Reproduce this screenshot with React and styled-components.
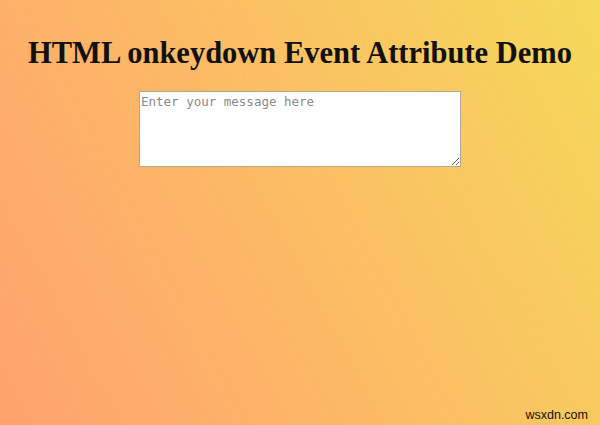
import React from "react";
import styled, { createGlobalStyle } from "styled-components";

const GlobalStyle = createGlobalStyle`
  html, body {
    margin: 0;
    padding: 0;
  }
  body {
    font-family: "Liberation Serif", "Times New Roman", serif;
  }
`;

const Page = styled.div`
  position: relative;
  width: 600px;
  height: 425px;
  overflow: hidden;
  background: linear-gradient(62deg, #ffa26f 0%, #fcbb65 48%, #f5d95a 100%);
  display: flex;
  flex-direction: column;
  align-items: center;
`;

const Title = styled.h1`
  margin: 36px 0 0;
  font-family: "Liberation Serif", "Times New Roman", serif;
  font-size: 30.5px;
  font-weight: bold;
  color: #111;
  line-height: 34px;
  text-align: center;
`;

const Message = styled.textarea`
  box-sizing: border-box;
  width: 322px;
  height: 76px;
  margin-top: 21px;
  padding: 2px 1px;
  border: 1px solid #b0a89a;
  background: #fff;
  font-family: "DejaVu Sans Mono", "Liberation Mono", monospace;
  font-size: 12.5px;
  line-height: 15px;
  color: #222;

  &::placeholder {
    color: #8a8a8a;
  }
`;

const Watermark = styled.span`
  position: absolute;
  right: 12px;
  bottom: 3px;
  font-family: "Liberation Sans", Arial, sans-serif;
  font-size: 12.5px;
  color: #111;
`;

export default function App() {
  return (
    <>
      <GlobalStyle />
      <Page>
        <Title>HTML onkeydown Event Attribute Demo</Title>
        <Message placeholder="Enter your message here" />
        <Watermark>wsxdn.com</Watermark>
      </Page>
    </>
  );
}
